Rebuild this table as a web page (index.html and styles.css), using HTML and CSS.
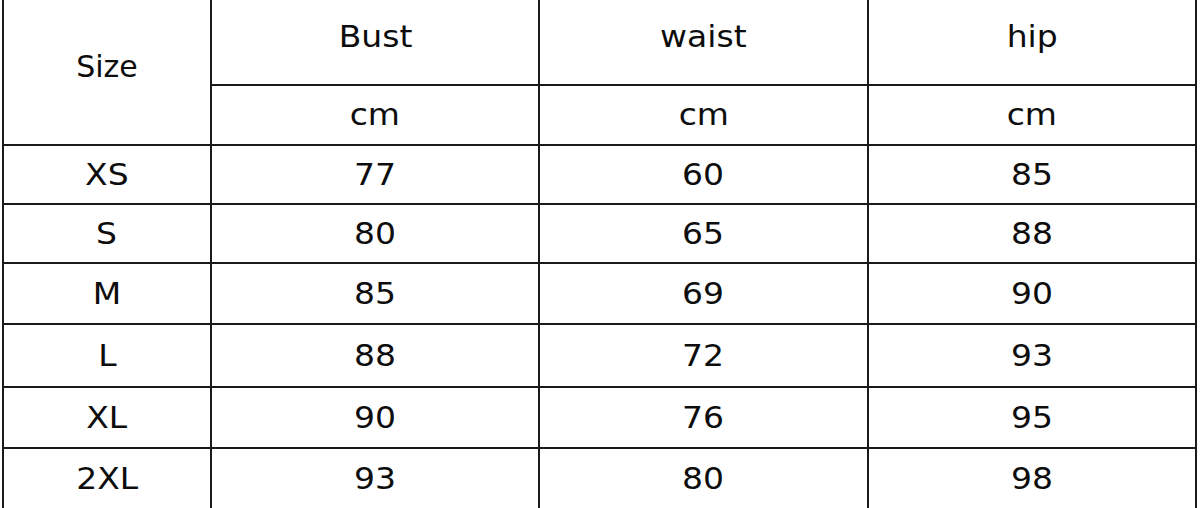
FILE: index.html
```html
<!DOCTYPE html>
<html>
<head>
<meta charset="utf-8">
<link rel="stylesheet" href="styles.css">
</head>
<body>
<div class="page">
<table class="chart">
  <colgroup>
    <col class="c1"><col class="c2"><col class="c3"><col class="c4">
  </colgroup>
  <tr class="h1">
    <td rowspan="2"><span class="plain">Size</span></td>
    <td><span>Bust</span></td>
    <td><span>waist</span></td>
    <td><span>hip</span></td>
  </tr>
  <tr class="h2">
    <td><span>cm</span></td>
    <td><span>cm</span></td>
    <td><span>cm</span></td>
  </tr>
  <tr class="r59"><td><span>XS</span></td><td><span>77</span></td><td><span>60</span></td><td><span>85</span></td></tr>
  <tr class="r59"><td><span>S</span></td><td><span>80</span></td><td><span>65</span></td><td><span>88</span></td></tr>
  <tr class="r61"><td><span>M</span></td><td><span>85</span></td><td><span>69</span></td><td><span>90</span></td></tr>
  <tr class="r63"><td><span>L</span></td><td><span>88</span></td><td><span>72</span></td><td><span>93</span></td></tr>
  <tr class="r61"><td><span>XL</span></td><td><span>90</span></td><td><span>76</span></td><td><span>95</span></td></tr>
  <tr class="r61"><td><span>2XL</span></td><td><span>93</span></td><td><span>80</span></td><td><span>98</span></td></tr>
</table>
</div>
</body>
</html>
```

FILE: styles.css
```css
html, body {
  margin: 0;
  padding: 0;
  background: #ffffff;
  overflow: hidden;
}
.page {
  width: 1200px;
  height: 508px;
  overflow: hidden;
  padding-left: 2px;
  box-sizing: border-box;
}
.chart {
  margin-top: -13px;
  border-collapse: collapse;
  table-layout: fixed;
  width: 1195px;
  font-family: "DejaVu Sans", Verdana, sans-serif;
  font-size: 30px;
  color: #0d0d0d;
}
.chart td {
  border: 2px solid #1a1a1a;
  text-align: center;
  vertical-align: middle;
  padding: 0;
  line-height: 1;
}
.chart td span {
  display: inline-block;
  transform: scaleX(1.1);
}
.chart td span.plain {
  transform: none;
}
.c1 { width: 208px; }
.c2 { width: 328px; }
.c3 { width: 329px; }
.c4 { width: 328px; }
.h1 { height: 97px; }
.h2 { height: 60px; }
.r59 { height: 59px; }
.r61 { height: 61px; }
.r63 { height: 63px; }
```
